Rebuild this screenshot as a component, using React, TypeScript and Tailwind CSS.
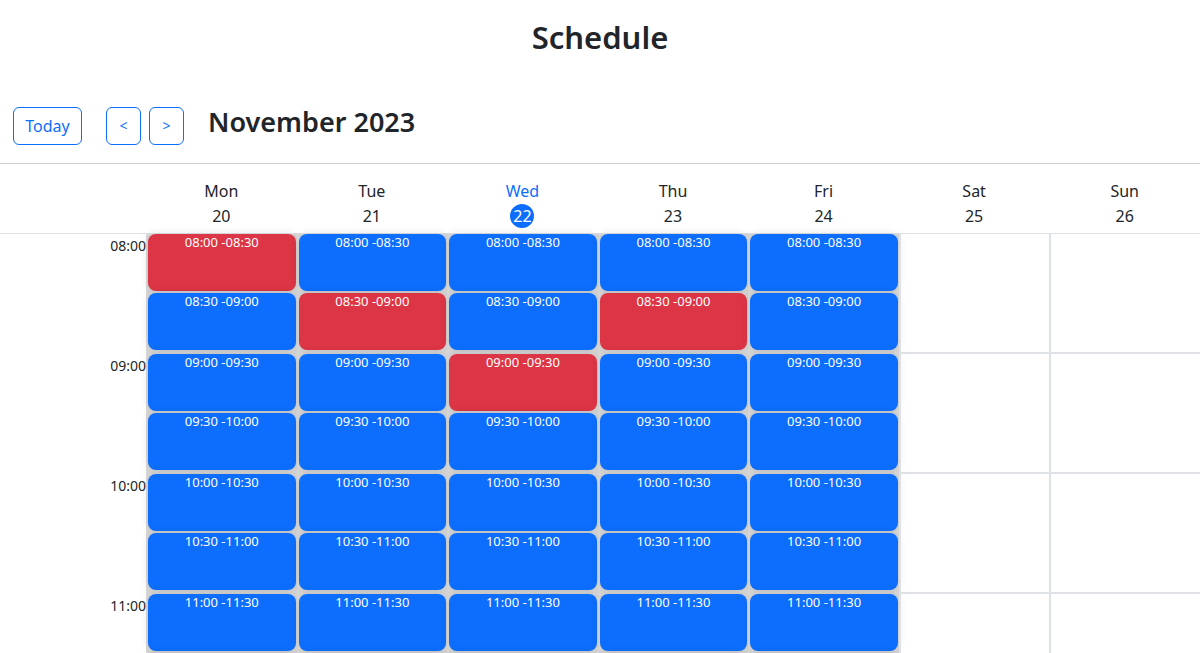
const days = [
  { name: 'Mon', date: 20, work: true },
  { name: 'Tue', date: 21, work: true },
  { name: 'Wed', date: 22, work: true, today: true },
  { name: 'Thu', date: 23, work: true },
  { name: 'Fri', date: 24, work: true },
  { name: 'Sat', date: 25, work: false },
  { name: 'Sun', date: 26, work: false },
];

const hours = ['08:00', '09:00', '10:00', '11:00'];

// two half-hour slots per hour
const slotsFor = (h: string) => {
  const n = parseInt(h, 10);
  const pad = (x: number) => String(x).padStart(2, '0');
  return [`${pad(n)}:00 -${pad(n)}:30`, `${pad(n)}:30 -${pad(n + 1)}:00`];
};

// booked slots, by day index
const booked: Record<number, string[]> = {
  0: ['08:00 -08:30'],
  1: ['08:30 -09:00'],
  2: ['09:00 -09:30'],
  3: ['08:30 -09:00'],
};

function DayColumn({ idx, work }: { idx: number; work: boolean }) {
  if (!work) {
    return (
      <div className="border-l-2 border-[#dee2e6] flex flex-col">
        {hours.map(h => (
          <div key={h} className="h-[120px] shrink-0 border-b-2 border-[#dee2e6]" />
        ))}
      </div>
    );
  }
  return (
    <div className="border-l-2 border-[#d9d9d9] bg-[#d9d9d9] flex flex-col">
      {hours.map(h => (
        <div key={h} className="h-[120px] shrink-0 flex flex-col gap-[2px] pt-0 pb-[4px] pr-px">
          {slotsFor(h).map(s => {
            const red = booked[idx]?.includes(s);
            return (
              <div
                key={s}
                className={`h-[57px] shrink-0 rounded-lg text-white text-[13px] leading-[16px] text-center shadow-[0_0_10px_rgba(0,0,0,0.12)] ${red ? 'bg-[#dc3545]' : 'bg-[#0d6efd]'}`}
              >
                {s}
              </div>
            );
          })}
        </div>
      ))}
    </div>
  );
}

export default function App() {
  return (
    <div className="h-[653px] overflow-hidden bg-white text-[#212529]" style={{ fontFamily: '"Noto Sans", sans-serif' }}>
      <h2 className="text-center text-[31px] font-semibold leading-[38px] pt-[18px]">Schedule</h2>

      <div className="flex items-center mt-[51px] pb-[18px] pl-[13px] border-b border-[#cfcfcf]">
        <button className="h-[38px] w-[69px] text-base text-[#0d6efd] border border-[#0d6efd] rounded-md">Today</button>
        <div className="flex gap-2 ml-6">
          <button className="h-[38px] w-[35px] text-sm text-[#0d6efd] border border-[#0d6efd] rounded-md">&lt;</button>
          <button className="h-[38px] w-[35px] text-sm text-[#0d6efd] border border-[#0d6efd] rounded-md">&gt;</button>
        </div>
        <h3 className="ml-[24px] h-[38px] text-[27px] font-semibold leading-[30px]">November 2023</h3>
      </div>

      <div className="grid grid-cols-[146px_repeat(7,1fr)] border-b border-[#dee2e6] h-[70px]">
        <div />
        {days.map(d => (
          <div key={d.name} className="flex flex-col items-center pt-[16px]">
            <span className={`text-base leading-[22px] ${d.today ? 'text-[#0d6efd]' : ''}`}>{d.name}</span>
            {d.today ? (
              <span className="mt-[2px] w-6 h-6 rounded-full bg-[#0d6efd] text-white text-base leading-6 text-center">{d.date}</span>
            ) : (
              <span className="mt-[2px] text-base leading-6">{d.date}</span>
            )}
          </div>
        ))}
      </div>

      <div className="grid grid-cols-[146px_repeat(7,1fr)]">
        <div className="flex flex-col">
          {hours.map(h => (
            <div key={h} className="h-[120px] shrink-0 text-right text-[14px] leading-[16px] pt-[4px] pr-0">
              {h}
            </div>
          ))}
        </div>
        {days.map((d, i) => (
          <DayColumn key={d.name} idx={i} work={d.work} />
        ))}
      </div>
    </div>
  );
}
